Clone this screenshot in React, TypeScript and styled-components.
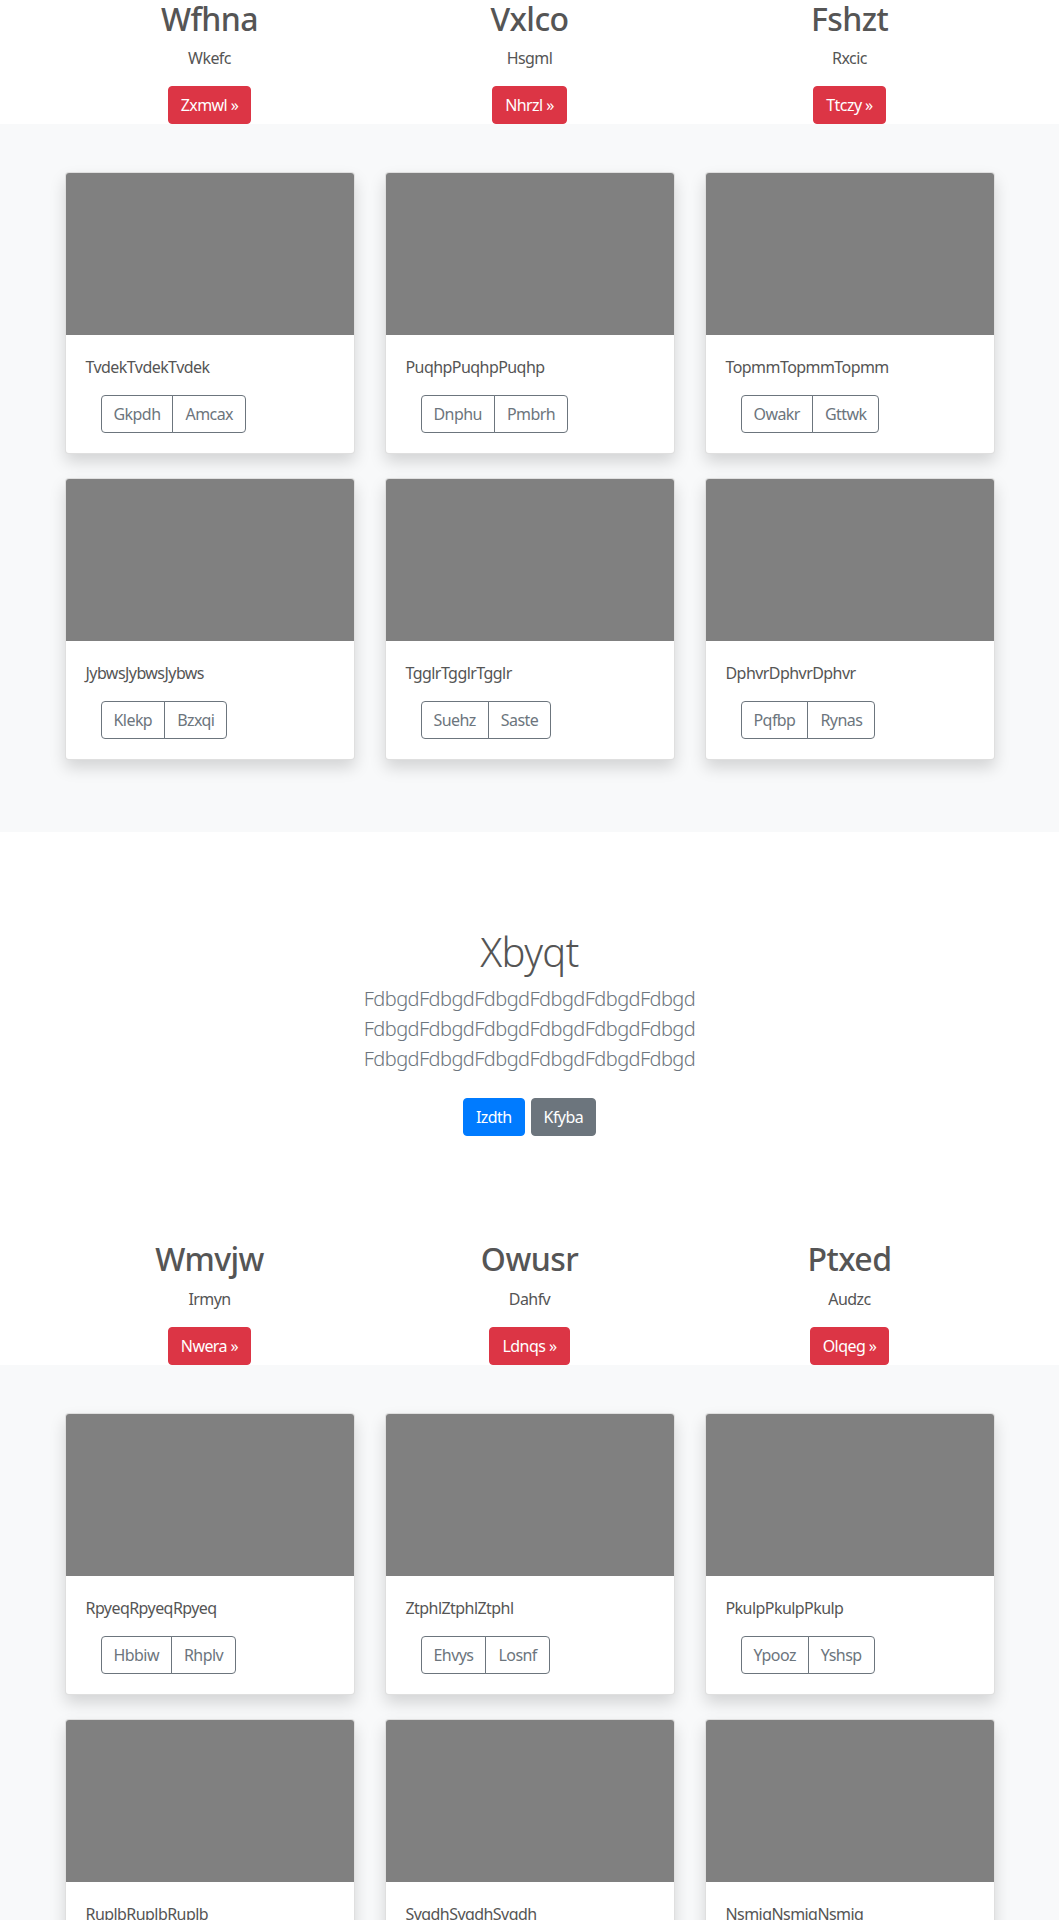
import React from 'react';
import styled, { createGlobalStyle } from 'styled-components';

const GlobalStyle = createGlobalStyle`
  body {
    margin: 0;
    font-family: "Segoe UI", "Noto Sans", "Open Sans", sans-serif;
    font-size: 16px;
    line-height: 1.5;
    letter-spacing: -0.035em;
    color: #555;
    background: #fff;
  }
  * { box-sizing: border-box; }
  button { letter-spacing: inherit; }
`;

const Container = styled.div`
  width: 960px;
  margin: 0 auto;
  padding: 0 15px;
`;

const Row = styled.div`
  display: grid;
  grid-template-columns: repeat(3, 1fr);
  column-gap: 30px;
`;

const Feature = styled.div`
  text-align: center;
`;

const FeatureTitle = styled.h2`
  margin: 0 0 8px;
  font-size: 32px;
  font-weight: 500;
  line-height: 1.2;
  color: #555;
`;

const FeatureText = styled.p`
  margin: 0 0 16px;
`;

const Button = styled.button<{ $variant: 'danger' | 'primary' | 'secondary' }>`
  display: inline-block;
  padding: 6px 12px;
  font-family: inherit;
  font-size: 16px;
  line-height: 1.5;
  border-radius: 4px;
  border: 1px solid transparent;
  color: #fff;
  cursor: pointer;
  background: ${(p) =>
    p.$variant === 'danger' ? '#dc3545' : p.$variant === 'primary' ? '#007bff' : '#6c757d'};
  border-color: ${(p) =>
    p.$variant === 'danger' ? '#dc3545' : p.$variant === 'primary' ? '#007bff' : '#6c757d'};
`;

const Album = styled.section`
  background: #f8f9fa;
  padding: 48px 0 72px;
`;

const CardGrid = styled(Row)`
  row-gap: 24px;
`;

const Card = styled.div`
  background: #fff;
  border: 1px solid rgba(0, 0, 0, 0.125);
  border-radius: 4px;
  box-shadow: 0 8px 16px rgba(0, 0, 0, 0.15);
  overflow: hidden;
`;

const Thumb = styled.div`
  height: 162px;
  background: #808080;
`;

const CardBody = styled.div`
  padding: 20px;
`;

const CardText = styled.p`
  margin: 0 0 16px;
`;

const BtnGroup = styled.div`
  display: inline-flex;
  margin-left: 15px;
`;

const OutlineBtn = styled.button`
  padding: 6px 12px;
  font-family: inherit;
  font-size: 16px;
  line-height: 1.5;
  color: #6c757d;
  background: transparent;
  border: 1px solid #6c757d;
  cursor: pointer;
  &:first-child {
    border-radius: 4px 0 0 4px;
  }
  &:last-child {
    margin-left: -1px;
    border-radius: 0 4px 4px 0;
  }
`;

const Jumbotron = styled.section`
  padding: 96px 0;
  text-align: center;
  background: #fff;
`;

const JumboTitle = styled.h1`
  margin: 0 0 8px;
  font-size: 40px;
  font-weight: 300;
  line-height: 1.2;
  color: #555;
`;

const Lead = styled.p`
  margin: 0 0 16px;
  font-size: 20px;
  font-weight: 300;
  color: #6c757d;
`;

const Actions = styled.p`
  margin: 0;
  display: flex;
  justify-content: center;
  gap: 6px;
  & > button {
    margin: 8px 0;
  }
`;

type FeatureItem = { title: string; text: string; cta: string };
type CardItem = { text: string; a: string; b: string };

const features1: FeatureItem[] = [
  { title: 'Wfhna', text: 'Wkefc', cta: 'Zxmwl' },
  { title: 'Vxlco', text: 'Hsgml', cta: 'Nhrzl' },
  { title: 'Fshzt', text: 'Rxcic', cta: 'Ttczy' },
];

const features2: FeatureItem[] = [
  { title: 'Wmvjw', text: 'Irmyn', cta: 'Nwera' },
  { title: 'Owusr', text: 'Dahfv', cta: 'Ldnqs' },
  { title: 'Ptxed', text: 'Audzc', cta: 'Olqeg' },
];

const cards1: CardItem[] = [
  { text: 'Tvdek', a: 'Gkpdh', b: 'Amcax' },
  { text: 'Puqhp', a: 'Dnphu', b: 'Pmbrh' },
  { text: 'Topmm', a: 'Owakr', b: 'Gttwk' },
  { text: 'Jybws', a: 'Klekp', b: 'Bzxqi' },
  { text: 'Tgglr', a: 'Suehz', b: 'Saste' },
  { text: 'Dphvr', a: 'Pqfbp', b: 'Rynas' },
];

const cards2: CardItem[] = [
  { text: 'Rpyeq', a: 'Hbbiw', b: 'Rhplv' },
  { text: 'Ztphl', a: 'Ehvys', b: 'Losnf' },
  { text: 'Pkulp', a: 'Ypooz', b: 'Yshsp' },
  { text: 'Ruplb', a: 'Wkmae', b: 'Cxoqs' },
  { text: 'Svqdh', a: 'Tbjre', b: 'Lmfud' },
  { text: 'Nsmiq', a: 'Hgwpz', b: 'Qnvye' },
];

function Features({ items }: { items: FeatureItem[] }) {
  return (
    <Container>
      <Row>
        {items.map((f) => (
          <Feature key={f.title}>
            <FeatureTitle>{f.title}</FeatureTitle>
            <FeatureText>{f.text}</FeatureText>
            <Button $variant="danger">{f.cta} »</Button>
          </Feature>
        ))}
      </Row>
    </Container>
  );
}

function Cards({ items }: { items: CardItem[] }) {
  return (
    <Album>
      <Container>
        <CardGrid>
          {items.map((c) => (
            <Card key={c.text}>
              <Thumb />
              <CardBody>
                <CardText>{c.text + c.text + c.text}</CardText>
                <BtnGroup>
                  <OutlineBtn>{c.a}</OutlineBtn>
                  <OutlineBtn>{c.b}</OutlineBtn>
                </BtnGroup>
              </CardBody>
            </Card>
          ))}
        </CardGrid>
      </Container>
    </Album>
  );
}

export default function App() {
  const line = 'Fdbgd'.repeat(6);
  return (
    <>
      <GlobalStyle />
      <Features items={features1} />
      <Cards items={cards1} />
      <Jumbotron>
        <Container>
          <JumboTitle>Xbyqt</JumboTitle>
          <Lead>
            {line}
            <br />
            {line}
            <br />
            {line}
          </Lead>
          <Actions>
            <Button $variant="primary">Izdth</Button>
            <Button $variant="secondary">Kfyba</Button>
          </Actions>
        </Container>
      </Jumbotron>
      <Features items={features2} />
      <Cards items={cards2} />
    </>
  );
}
